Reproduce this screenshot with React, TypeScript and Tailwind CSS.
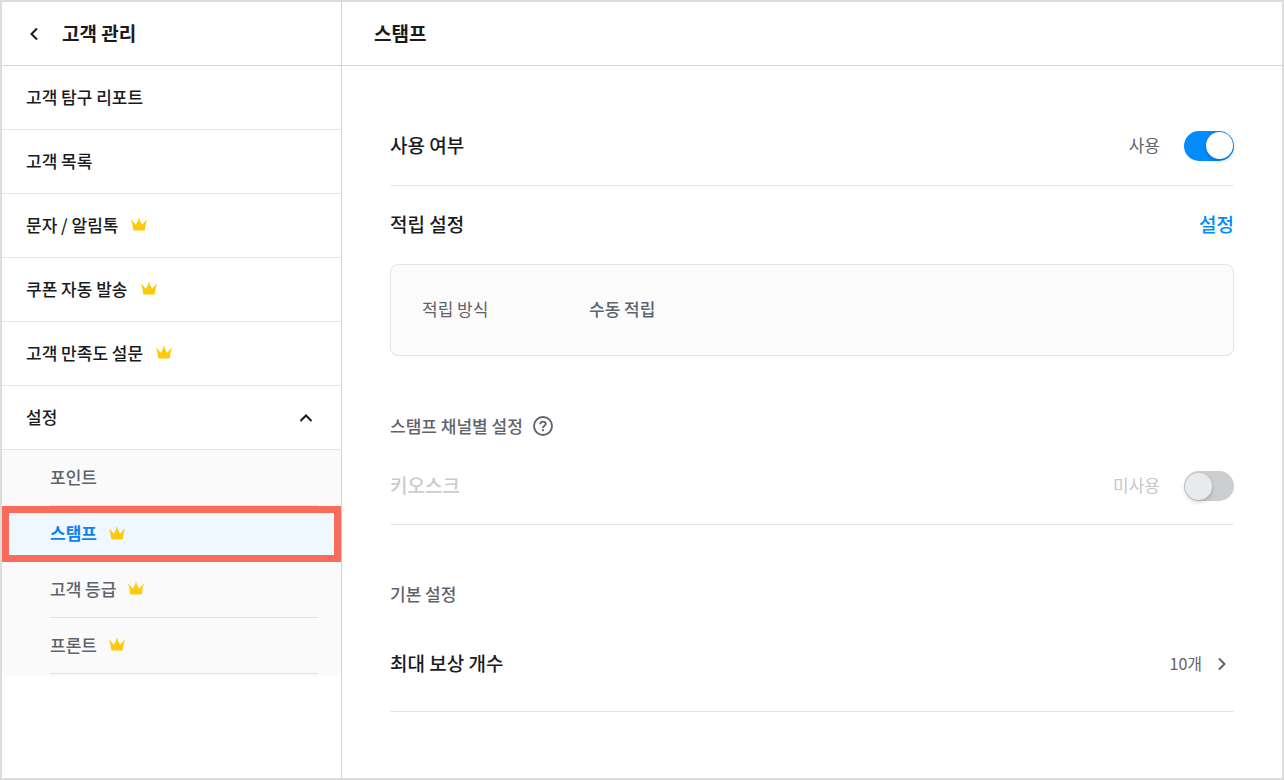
import { useState } from 'react';
import clsx from 'clsx';

type MenuItem = {
  label: string;
  premium?: boolean;
};

const menuItems: MenuItem[] = [
  { label: '고객 탐구 리포트' },
  { label: '고객 목록' },
  { label: '문자 / 알림톡', premium: true },
  { label: '쿠폰 자동 발송', premium: true },
  { label: '고객 만족도 설문', premium: true },
];

const settingItems: MenuItem[] = [
  { label: '포인트' },
  { label: '스탬프', premium: true },
  { label: '고객 등급', premium: true },
  { label: '프론트', premium: true },
];

function CrownIcon() {
  return (
    <svg className="mb-0.5 h-[13px] w-4 shrink-0" viewBox="0 0 16 13" fill="#fcc90c" aria-hidden="true">
      <circle cx="8" cy="1.1" r="0.8" />
      <circle cx="0.9" cy="3" r="0.8" />
      <circle cx="15.1" cy="3" r="0.8" />
      <path d="M0.8 3.4 L1.4 3 L4.9 6.8 L7.6 1.4 H8.4 L11.1 6.8 L14.6 3 L15.2 3.4 L13.7 11.9 Q13.5 12.6 12.8 12.6 H3.2 Q2.5 12.6 2.3 11.9 Z" />
    </svg>
  );
}

function MenuLabel({ item }: { item: MenuItem }) {
  return (
    <>
      <span className="pb-0.5">{item.label}</span>
      {item.premium && <CrownIcon />}
    </>
  );
}

type ChevronProps = {
  path: string;
  className?: string;
};

function Chevron({ path, className }: ChevronProps) {
  return (
    <svg
      className={clsx('size-4 shrink-0', className)}
      viewBox="0 0 16 16"
      fill="none"
      stroke="currentColor"
      strokeWidth="2"
      aria-hidden="true"
    >
      <path d={path} />
    </svg>
  );
}

function HelpIcon() {
  return (
    <svg className="size-5" viewBox="0 0 20 20" fill="none" stroke="currentColor" strokeWidth="1.9" aria-hidden="true">
      <circle cx="10" cy="10" r="9" />
      <path d="M7.3 8.2 C7.3 6.6 8.4 5.6 10 5.6 C11.6 5.6 12.7 6.6 12.7 7.9 C12.7 9.7 10 9.9 10 12" />
      <circle cx="10" cy="14.2" r="1.1" fill="currentColor" stroke="none" />
    </svg>
  );
}

type ToggleRowProps = {
  id: string;
  title: string;
  checked: boolean;
  disabled?: boolean;
  className: string;
  onChange?: (checked: boolean) => void;
};

function ToggleRow({ id, title, checked, disabled, className, onChange }: ToggleRowProps) {
  return (
    <div className={clsx('flex items-center justify-between border-b border-[#e5e5e8]', className)}>
      <label htmlFor={id} className={clsx('pb-0.5 text-[19px] font-medium', disabled && 'text-[#cacbcf]')}>
        {title}
      </label>
      <div className="flex items-center gap-6">
        <span className={clsx('pb-0.5 text-[17px]', disabled ? 'text-[#c5c7cc]' : 'text-[#5f636b]')}>
          {checked ? '사용' : '미사용'}
        </span>
        <input
          id={id}
          type="checkbox"
          role="switch"
          checked={checked}
          disabled={disabled}
          onChange={(e) => onChange?.(e.target.checked)}
          className="flex h-[30px] w-[50px] appearance-none items-center rounded-full bg-[#cdced2] px-px before:size-[27px] before:rounded-full before:bg-white before:shadow-[0_2px_4px_rgba(0,0,0,0.2)] checked:justify-end checked:bg-[#008cff] disabled:before:bg-[#e9eaeb]"
        />
      </div>
    </div>
  );
}

export default function App() {
  const [enabled, setEnabled] = useState(true);
  const [open, setOpen] = useState(true);
  const [selected, setSelected] = useState('스탬프');

  return (
    <div className="flex min-h-screen border-2 border-[#dcdcdc] bg-white font-['Noto_Sans_CJK_KR',sans-serif] leading-6 text-[#1a1b1e]">
      <aside className="w-[340px] shrink-0 border-r border-[#d2d3d5]">
        <header className="flex h-16 items-center gap-5 border-b border-[#d2d3d5] px-6">
          <button type="button" aria-label="뒤로">
            <Chevron path="M11 2.5 L5.5 8 L11 13.5" />
          </button>
          <h1 className="pb-0.5 text-[19px] font-bold">고객 관리</h1>
        </header>

        <nav className="text-[17px] font-medium">
          {menuItems.map((item) => (
            <a
              key={item.label}
              href="#"
              className="flex h-16 items-center gap-[13px] border-b border-[#e5e5e8] px-6"
            >
              <MenuLabel item={item} />
            </a>
          ))}
          <button
            type="button"
            aria-expanded={open}
            onClick={() => setOpen(!open)}
            className="flex h-16 w-full items-center justify-between border-b border-[#e5e5e8] pr-[27px] pl-6"
          >
            <span className="pb-0.5">설정</span>
            <Chevron path="M2.5 11 L8 5.5 L13.5 11" className={clsx(!open && 'rotate-180')} />
          </button>

          {open && (
            <div className="bg-[#fafafa] pb-0.5 text-[#5f636b]">
              {settingItems.map((item) =>
                item.label === selected ? (
                  <a
                    key={item.label}
                    href="#"
                    aria-current="page"
                    className="flex h-14 items-center gap-3 border-[7px] border-[#fa6b5b] bg-[#eff8ff] pl-[41px] font-bold text-[#0f80f2]"
                  >
                    <MenuLabel item={item} />
                  </a>
                ) : (
                  <a
                    key={item.label}
                    href="#"
                    onClick={() => setSelected(item.label)}
                    className="mr-[23px] ml-12 flex h-14 items-center gap-3 border-b border-[#e2e3e5]"
                  >
                    <MenuLabel item={item} />
                  </a>
                )
              )}
            </div>
          )}
        </nav>
      </aside>

      <main className="min-w-0 flex-1">
        <header className="flex h-16 items-center border-b border-[#d2d3d5] px-8">
          <h2 className="pb-0.5 text-[19px] font-bold">스탬프</h2>
        </header>

        <div className="px-12 pt-10">
          <ToggleRow id="use" title="사용 여부" checked={enabled} onChange={setEnabled} className="h-20" />

          <section>
            <div className="flex h-[78px] items-center justify-between pb-0.5 text-[19px] font-medium">
              <h3>적립 설정</h3>
              <button type="button" className="text-[#008cff]">
                설정
              </button>
            </div>
            <dl className="flex h-[92px] items-center rounded-lg border border-[#e5e5e8] bg-[#fbfbfb] px-[31px] pb-0.5 text-[17px] text-[#5f636b]">
              <dt className="w-[167px]">적립 방식</dt>
              <dd className="font-medium">수동 적립</dd>
            </dl>
          </section>

          <section className="pt-12 text-[17px]">
            <div className="flex h-11 items-center gap-[10px] pb-px text-[#5f636b]">
              <h3 className="font-medium">스탬프 채널별 설정</h3>
              <button type="button" aria-label="도움말">
                <HelpIcon />
              </button>
            </div>
            <ToggleRow id="kiosk" title="키오스크" checked={false} disabled className="h-[77px]" />
          </section>

          <section className="pt-12">
            <h3 className="flex h-11 items-center pb-0.5 text-[17px] font-medium text-[#5f636b]">기본 설정</h3>
            <div className="flex h-[95px] items-center justify-between border-b border-[#e5e5e8]">
              <h4 className="pb-0.5 text-[19px] font-medium">최대 보상 개수</h4>
              <button type="button" className="flex items-center gap-3 pr-1 text-base text-[#5f636b]">
                <span className="pb-0.5">10개</span>
                <Chevron path="M5 2.5 L10.5 8 L5 13.5" />
              </button>
            </div>
          </section>
        </div>
      </main>
    </div>
  );
}
